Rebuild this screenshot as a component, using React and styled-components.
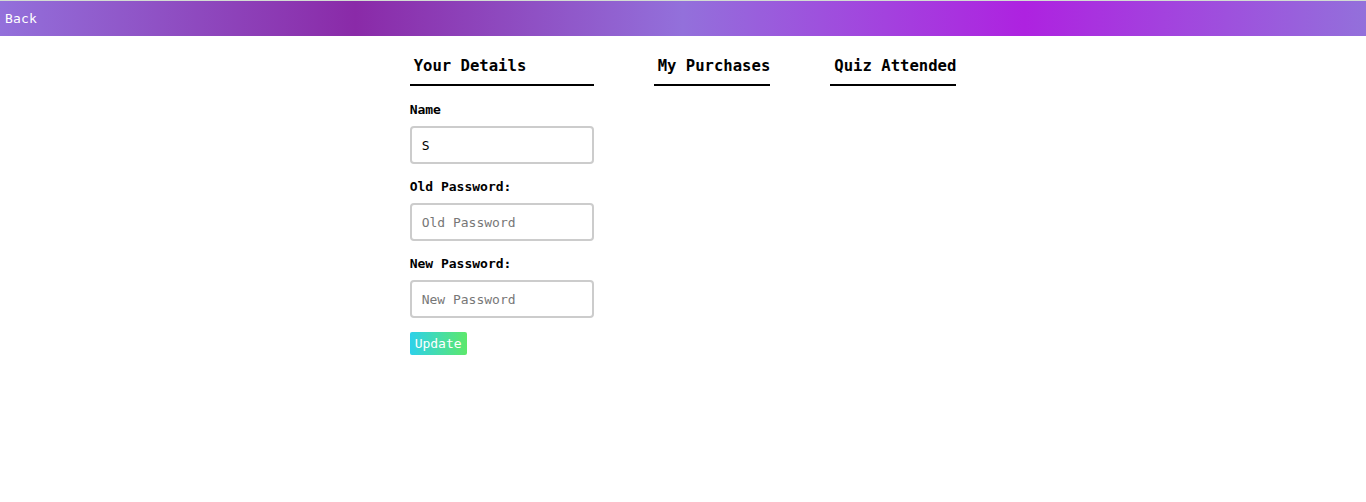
import styled, { createGlobalStyle } from 'styled-components';

const GlobalStyle = createGlobalStyle`
  body {
    margin: 0;
    background: #fff;
    font-family: "DejaVu Sans Mono", "Liberation Mono", monospace;
  }
`;

const App = () => {
  return (
    <>
      <GlobalStyle />
      <TopBar>
        <BackLink>Back</BackLink>
      </TopBar>
      <Main>
        <Column>
          <Tab>Your Details</Tab>
          <Form onSubmit={(e) => e.preventDefault()}>
            <Label>Name</Label>
            <Input defaultValue="S" />
            <Label>Old Password:</Label>
            <Input type="password" placeholder="Old Password" />
            <Label>New Password:</Label>
            <Input type="password" placeholder="New Password" />
            <UpdateButton type="submit">Update</UpdateButton>
          </Form>
        </Column>
        <Tab>My Purchases</Tab>
        <Tab>Quiz Attended</Tab>
      </Main>
    </>
  );
};

const TopBar = styled.header`
  display: flex;
  align-items: center;
  height: 35px;
  border-top: 1px solid #d3dcd3;
  background: linear-gradient(
    90deg,
    #9370db 0%,
    #8a2aa8 26%,
    #9370db 50%,
    #ae22e0 75%,
    #9370db 100%
  );
`;

const BackLink = styled.span`
  padding-left: 5px;
  color: #fff;
  font-size: 13px;
  letter-spacing: 0.2px;
  cursor: pointer;
`;

const Main = styled.main`
  display: flex;
  justify-content: center;
  align-items: flex-start;
  gap: 60px;
  padding: 21px 0 0 0;
`;

const Column = styled.div`
  display: flex;
  flex-direction: column;
  width: 184px;
`;

const Tab = styled.div`
  padding: 0 0 9px 4px;
  border-bottom: 2px solid #000;
  font-size: 15.6px;
  line-height: 18px;
  font-weight: bold;
  color: #000;
  white-space: nowrap;
`;

const Form = styled.form`
  display: flex;
  flex-direction: column;
  align-items: flex-start;
  padding-top: 16px;
`;

const Label = styled.label`
  font-size: 13px;
  line-height: 16px;
  font-weight: bold;
  margin-bottom: 8px;
`;

const Input = styled.input`
  box-sizing: border-box;
  width: 184px;
  height: 38px;
  padding: 0 10px;
  margin: 0 0 15px;
  border: 2px solid #ccc;
  border-radius: 4px;
  font-family: inherit;
  font-size: 13px;
  color: #000;
  outline: none;

  &::placeholder {
    color: #777;
  }
`;

const UpdateButton = styled.button`
  height: 23px;
  margin-top: -1px;
  padding: 0 5px;
  border: none;
  border-radius: 2px;
  background: linear-gradient(90deg, #2dd1ea, #5de86b);
  color: #fff;
  font-family: inherit;
  font-size: 13px;
  cursor: pointer;
`;

export default App;
